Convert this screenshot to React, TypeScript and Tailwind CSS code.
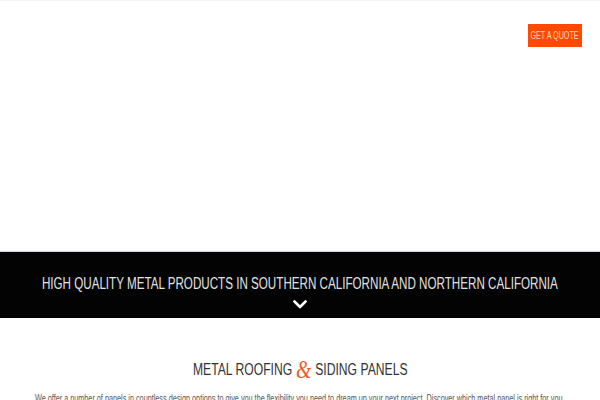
const sans = { fontFamily: '"Liberation Sans", Arial, sans-serif' };

export default function App() {
  return (
    <div className="w-[600px] h-[400px] overflow-hidden bg-white border-t border-gray-100" style={sans}>
      <header className="h-[250px] flex justify-end items-start pt-[23px] pr-[18px]">
        <button className="w-[54px] h-[23px] bg-[#ff4b00] flex justify-center items-center">
          <span className="shrink-0 whitespace-nowrap text-[10px] leading-none text-[#ffd2b8] scale-x-[0.72]">GET A QUOTE</span>
        </button>
      </header>

      <section className="h-[67px] bg-[#030303] border-t border-gray-300 flex flex-col items-center pt-[24px]">
        <div className="w-full flex justify-center">
          <h1 className="shrink-0 whitespace-nowrap text-[16px] leading-none text-[#e2e2e2] scale-x-[0.727]">
            HIGH QUALITY METAL PRODUCTS IN SOUTHERN CALIFORNIA AND NORTHERN CALIFORNIA
          </h1>
        </div>
        <svg className="mt-[8px]" width="14" height="9" viewBox="0 0 14 9" fill="none">
          <polyline points="1.5,1.5 7,7 12.5,1.5" stroke="white" strokeWidth="2.6" strokeLinecap="round" strokeLinejoin="round" />
        </svg>
      </section>

      <section className="flex flex-col items-center pt-[43px]">
        <div className="w-full flex justify-center">
          <h2 className="shrink-0 whitespace-nowrap text-[16px] leading-none text-[#333] flex items-end scale-x-[0.76]">
            <span>METAL ROOFING</span>
            <span className="text-[26px] leading-[17px] italic text-[#ee5a1e] mx-[5px]" style={{ fontFamily: '"Liberation Serif", serif' }}>&amp;</span>
            <span>SIDING PANELS</span>
          </h2>
        </div>
        <div className="w-full flex justify-center mt-[16px]">
          <p className="shrink-0 whitespace-nowrap text-[10px] leading-none text-[#555] scale-x-[0.726]">
            We offer a number of panels in countless design options to give you the flexibility you need to dream up your next project. Discover which metal panel is right for you.
          </p>
        </div>
      </section>
    </div>
  );
}
